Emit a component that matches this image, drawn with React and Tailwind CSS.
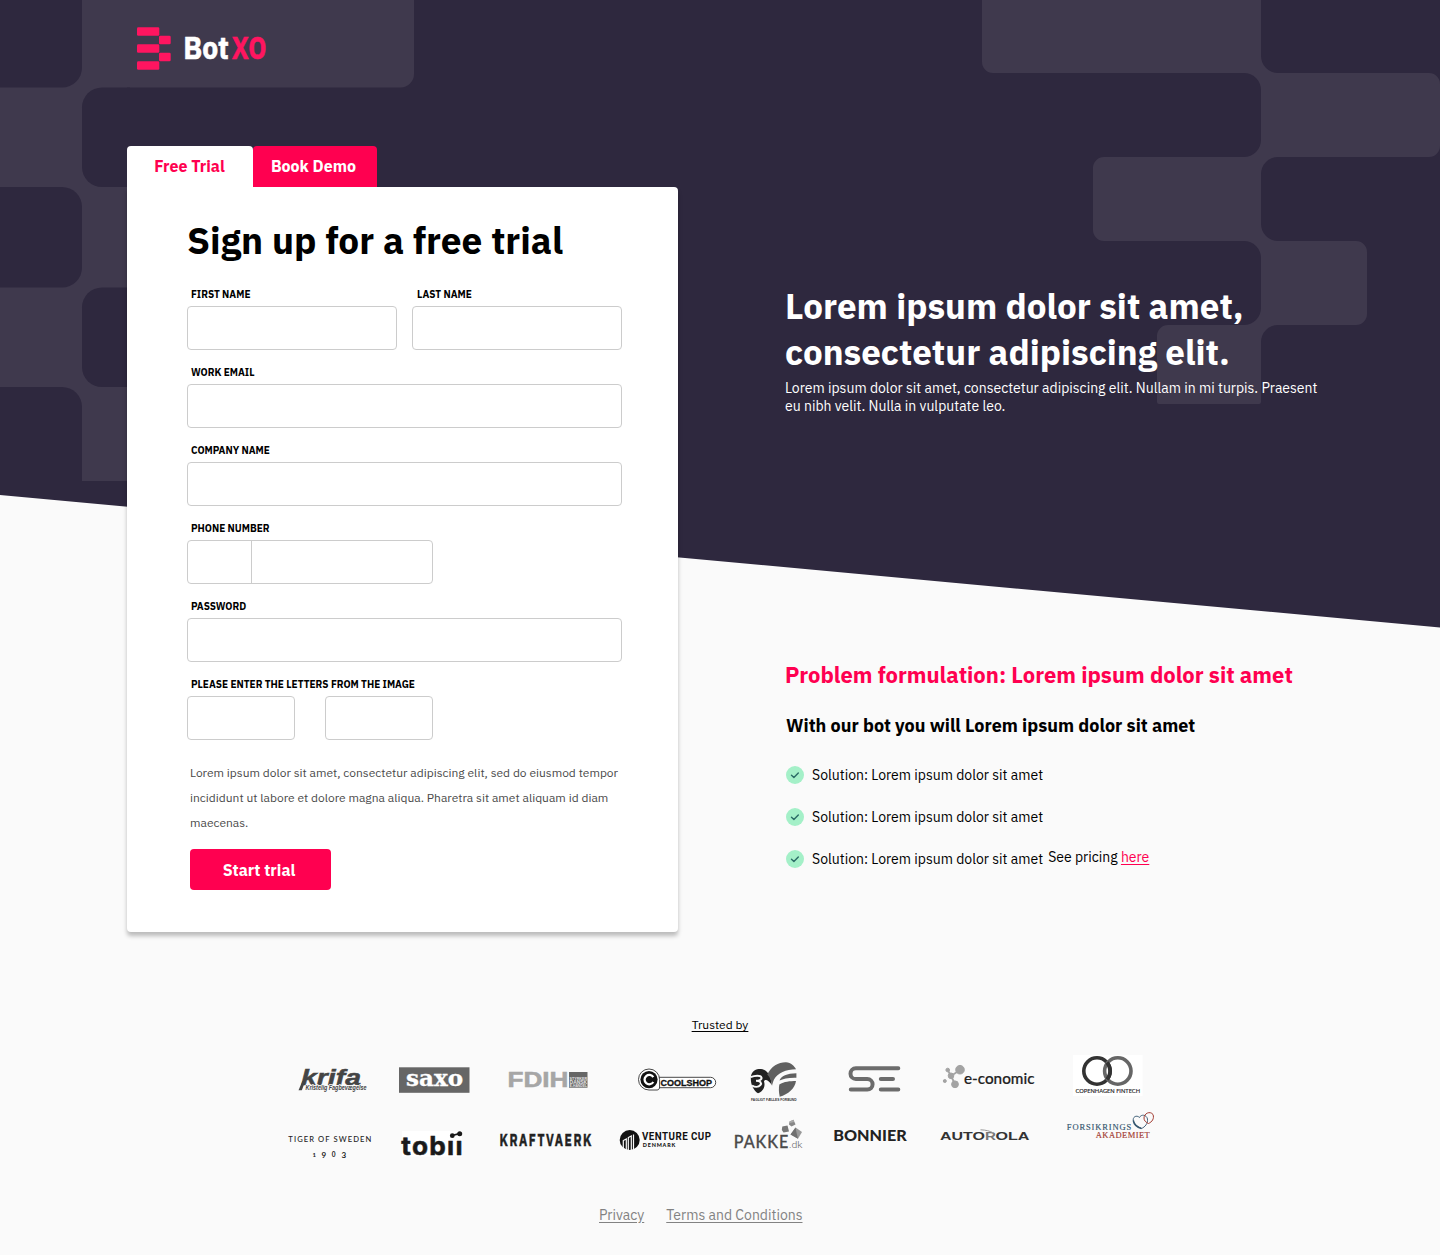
import React from "react";

const DARK = "#2e283e";
const LIGHT = "#3f394d";

function Backdrop() {
  return (
    <svg className="absolute inset-0 -z-10" width="1440" height="1255" viewBox="0 0 1440 1255" aria-hidden="true">
      <path d="M0 0H1440V627.5L0 495Z" fill={DARK} />
      {/* left block pattern */}
      <path d="M0 0H414V74a13.5 13.5 0 0 1-13.5 13.5H127V481H82V430H0Z" fill={LIGHT} />
      <path d="M0 0H82V67.500a20 20 0 0 1-20 20H0Z" fill={DARK} />
      <path d="M130 87.500H102a20 20 0 0 0-20 20V167a20 20 0 0 0 20 20H130Z" fill={DARK} />
      <path d="M0 187H62a20 20 0 0 1 20 20V267.500a20 20 0 0 1-20 20H0Z" fill={DARK} />
      <path d="M130 287.500H102a20 20 0 0 0-20 20V367a20 20 0 0 0 20 20H130Z" fill={DARK} />
      <path d="M0 387H62a20 20 0 0 1 20 20V440H0Z" fill={DARK} />
      {/* right block pattern */}
      <path
        fill={LIGHT}
        d="M982 0H1261V56a17 17 0 0 0 17 17H1429a11 11 0 0 1 11 11V146a11 11 0 0 1-11 11H1278a17 17 0 0 0-17 17V224a17 17 0 0 0 17 17H1356a11 11 0 0 1 11 11V314a11 11 0 0 1-11 11H1278a17 17 0 0 0-17 17V402a2 2 0 0 1-2 2H1159a2 2 0 0 1-2-2V336a11 11 0 0 1 11-11H1244a17 17 0 0 0 17-17V258a17 17 0 0 0-17-17H1104a11 11 0 0 1-11-11V168a11 11 0 0 1 11-11H1244a17 17 0 0 0 17-17V90a17 17 0 0 0-17-17H993a11 11 0 0 1-11-11Z"
      />
    </svg>
  );
}

function BotXOLogo() {
  return (
    <svg className="overflow-visible" width="140" height="46" viewBox="136 26 140 46">
      <g fill="#ff1560">
        <rect x="137" y="27.300" width="22.300" height="8.500" rx="1.300" />
        <rect x="159" y="35.800" width="11.700" height="8.500" rx="1.300" />
        <rect x="137" y="44.300" width="22.300" height="8.500" rx="1.300" />
        <rect x="159" y="52.800" width="11.700" height="8.500" rx="1.300" />
        <rect x="137" y="61.200" width="22.300" height="8.500" rx="1.300" />
      </g>
      <g fontWeight="700" fontSize="30.500" strokeWidth=".5">
        <text x="183.300" y="59.200" fill="#fff" stroke="#fff" textLength="45.500" lengthAdjust="spacingAndGlyphs">Bot</text>
        <text x="231.800" y="59.200" fill="#ff1560" stroke="#ff1560" textLength="34.500" lengthAdjust="spacingAndGlyphs">XO</text>
      </g>
    </svg>
  );
}

function Field({ label, className = "", labelClass = "pl-1", children }) {
  return (
    <label className={"flex flex-col gap-[3px] " + className}>
      <span className={"text-[10px] leading-4 font-bold whitespace-nowrap " + labelClass}>{label}</span>
      {children || <Box className="w-full" />}
    </label>
  );
}

function Box({ className }) {
  return <input className={"h-11 rounded border border-[#cccccc] bg-white px-3 text-sm outline-none " + className} />;
}

function Solution({ children }) {
  return (
    <li className="flex h-[18px] items-center">
      <svg width="18" height="18" viewBox="0 0 18 18" className="mr-2">
        <circle cx="9" cy="9" r="9" fill="#a4f0c8" />
        <path d="M5.500 9.300 7.900 11.500 12.300 7" fill="none" stroke="#2b6b66" strokeWidth="1.400" strokeLinecap="round" strokeLinejoin="round" />
      </svg>
      <span className="text-sm leading-[18px]">Solution: Lorem ipsum dolor sit amet</span>
      {children}
    </li>
  );
}

function Fit({ w, ...p }) {
  return <text textLength={w} lengthAdjust="spacingAndGlyphs" {...p} />;
}

function LogoRowOne() {
  return (
    <div className="flex h-[50px] pl-[296px]">
      <svg className="overflow-visible" width="74" height="50" viewBox="296 1054 74 50">
        <path d="M305 1082 301.800 1090.300H298.500L302.500 1081Z" fill="#444" />
        <Fit x="301" y="1084.500" w="60" fontFamily="Liberation Sans" fontWeight="700" fontStyle="italic" fontSize="22.500" fill="#444" stroke="#444" strokeWidth=".5">krifa</Fit>
        <Fit x="305.500" y="1089.600" w="61" fontFamily="Liberation Sans" fontWeight="700" fontStyle="italic" fontSize="7" fill="#444" stroke="#fafafa" strokeWidth="1.500" paintOrder="stroke">Kristelig Fagbevægelse</Fit>
      </svg>
      <svg className="ml-7" width="72" height="50" viewBox="398 1054 72 50">
        <rect x="399" y="1067.300" width="70.500" height="25.500" fill="#666" />
        <Fit x="406" y="1085.800" w="57" fontFamily="DejaVu Serif" fontWeight="700" fontSize="21.500" fill="#fff" stroke="#fff" strokeWidth=".3">saxo</Fit>
      </svg>
      <svg className="ml-[37px] overflow-visible" width="82" height="50" viewBox="507 1054 82 50">
        <Fit x="507.500" y="1087.300" w="61" fontFamily="Liberation Sans" fontWeight="700" fontSize="21.500" fill="#a6a6a6" stroke="#a6a6a6" strokeWidth=".5">FDIH</Fit>
        <rect x="569" y="1072" width="18.500" height="15.700" fill="#666" />
        <g fontFamily="Liberation Sans" fontWeight="700" fill="#e2e2e2">
          <Fit x="569.600" y="1080" w="17.500" fontSize="3.800">STYRKER</Fit>
          <Fit x="569.600" y="1084" w="17.500" fontSize="4.800">DANSK</Fit>
          <Fit x="569.600" y="1087.200" w="17.500" fontSize="3.800">E-HANDEL</Fit>
        </g>
      </svg>
      <svg className="ml-[47px]" width="82" height="50" viewBox="636 1054 82 50">
        <g fill="#fff" stroke="#333" strokeWidth=".9">
          <path d="M655 1077.300H710.500a5.200 5.200 0 0 1 0 10.400H655Z" />
          <path d="M649 1069a10.600 10.600 0 0 1 10.600 10.600V1087c0 1.500-.8 3-2.500 3H649a10.500 10.500 0 0 1 0-21Z" />
        </g>
        <circle cx="649" cy="1079.600" r="8.600" fill="#111" />
        <path d="M653.300 1077.200A4.700 4.700 0 1 0 653.300 1082" fill="none" stroke="#fff" strokeWidth="2.300" />
        <Fit x="660.500" y="1085.700" w="51.500" fontFamily="Liberation Sans" fontWeight="700" fontSize="8.800" fill="#111" stroke="#111" strokeWidth=".3">COOLSHOP</Fit>
      </svg>
      <svg className="ml-[30px] overflow-visible" width="51" height="50" viewBox="748 1054 51 50">
        <path d="M751 1076C752 1070.300 757 1068.700 761 1069 767 1069.500 771 1075 771.800 1085 768 1079.500 765 1079 764 1081.500 766 1087 762 1092 758 1093.300 753 1090 750 1083 751 1076Z" fill="#222" />
        <path d="M750.500 1077.200C755 1075.300 760.500 1075 761.500 1077.500 762 1080 758.500 1080.800 756 1080.800 760.500 1080.800 762 1083 760.300 1085.200 758.500 1087.500 754.500 1087 752 1085.700" fill="none" stroke="#fafafa" strokeWidth="2" />
        <path d="M767.300 1074.500C771 1066 779 1062 786 1062.200 791 1062.700 794.500 1066 796 1069.300 786 1069.500 777.500 1073 774 1079.500 773 1082 772.300 1084 772 1086 771.500 1081 770 1077 767.300 1074.500Z" fill="#606060" />
        <path d="M779.500 1080.500C781 1076.300 787 1073.300 796.400 1073.300V1077.800C789 1077.500 783 1079 779.500 1080.500Z" fill="#606060" />
        <path d="M779.300 1084.500C784 1081.500 790 1081 796 1081 795 1088.500 788 1094.500 779.700 1096.700 778.700 1092 778.700 1088 779.300 1084.500Z" fill="#606060" />
        <Fit x="751" y="1101.200" w="45.500" fontFamily="Liberation Sans" fontWeight="700" fontSize="3.900" fill="#333">FAGLIGT FÆLLES FORBUND</Fit>
      </svg>
      <svg className="ml-[47px]" width="56" height="50" viewBox="846 1054 56 50">
        <path d="M898.300 1068.300H855.800a5.300 5.350 0 0 0 0 10.700H867.300a5.300 5.300 0 0 1 0 10.600H850.800M880.800 1079H893M880.800 1089.600H898.300" fill="none" stroke="#6c6c6c" strokeWidth="4" strokeLinecap="round" />
      </svg>
      <svg className="ml-[39px]" width="95" height="50" viewBox="941 1054 95 50">
        <g fill="#a3a3a3" stroke="#a3a3a3">
          <circle cx="947.700" cy="1070" r="1.800" />
          <circle cx="960" cy="1069.700" r="4.300" />
          <circle cx="951" cy="1075.800" r="2.800" />
          <circle cx="944.800" cy="1081" r="1.500" />
          <circle cx="955" cy="1084.300" r="3.400" />
          <path d="M947.700 1070 951 1076 960 1070M951 1076 955 1084" fill="none" strokeWidth="1.800" />
        </g>
        <Fit x="964" y="1084.300" w="70.500" fontFamily="Lato" fontWeight="500" fontSize="15" fill="#222" stroke="#222" strokeWidth=".2">e-conomic</Fit>
      </svg>
      <svg className="ml-[36px]" width="71" height="50" viewBox="1072 1054 71 50">
        <rect x="1073" y="1055" width="69.500" height="41" fill="#fff" />
        <circle cx="1097" cy="1071" r="13.200" fill="none" stroke="#333" strokeWidth="3.600" />
        <circle cx="1117.800" cy="1071" r="13.200" fill="none" stroke="#666" strokeWidth="3.600" />
        <path d="M1107 1062.500a13.200 13.200 0 0 1 0 17" fill="none" stroke="#333" strokeWidth="3.600" />
        <Fit x="1075.500" y="1093.200" w="64.500" fontFamily="Lato" fontSize="6" fill="#222" stroke="#222" strokeWidth=".15">COPENHAGEN FINTECH</Fit>
      </svg>
    </div>
  );
}

function LogoRowTwo() {
  return (
    <div className="mt-1 flex h-[55px] pl-[286px]">
      <svg width="87" height="55" viewBox="286 1108 87 55">
        <text x="288.300" y="1142" textLength="83" fontFamily="Lato" fontWeight="500" fontSize="7.600" fill="#222">TIGER OF SWEDEN</text>
        <g fontFamily="Lato" fontWeight="700" fill="#222">
          <text x="312.500" y="1156.500" fontSize="6">1</text>
          <text x="321.500" y="1158" fontSize="8">9</text>
          <text x="331.700" y="1156.500" fontSize="6.500">0</text>
          <text x="341.500" y="1158" fontSize="8">3</text>
        </g>
      </svg>
      <svg className="ml-[27px] overflow-visible" width="64" height="55" viewBox="400 1108 64 55">
        <rect x="402" y="1131" width="60" height="25.500" fill="#fff" />
        <Fit x="401.300" y="1154.800" w="62.500" fontFamily="Inter" fontWeight="700" fontSize="25" letterSpacing="1.200" fill="#1a1a1a" stroke="#1a1a1a" strokeWidth=".5">tobıı</Fit>
        <path d="M452.300 1135.500 459.300 1133.700" stroke="#1a1a1a" strokeWidth="1.800" />
        <circle cx="452.300" cy="1135.700" r="2.400" fill="#1a1a1a" />
        <circle cx="459.700" cy="1133.800" r="2.500" fill="#1a1a1a" />
      </svg>
      <svg className="ml-[34px] overflow-visible" width="95" height="55" viewBox="498 1108 95 55">
        <Fit x="499.500" y="1146" w="93.500" fontWeight="700" fontSize="17" letterSpacing="2.200" fill="#222" stroke="#222" strokeWidth=".4">KRAFTVAERK</Fit>
      </svg>
      <svg className="ml-[25px]" width="95" height="55" viewBox="618 1108 95 55">
        <circle cx="629.700" cy="1140" r="10" fill="#111" />
        <path d="M623.300 1150V1140.500L626.300 1139V1150M628.300 1150V1137.500L631.300 1136V1150M633.500 1150V1134.500" fill="none" stroke="#fafafa" strokeWidth="1.200" />
        <Fit x="642" y="1140" w="69.500" fontFamily="Roboto" fontWeight="700" fontSize="10.300" letterSpacing=".5" fill="#111">VENTURE CUP</Fit>
        <text x="642.800" y="1147.300" textLength="32.500" fontFamily="Lato" fontWeight="900" fontSize="5.400" fill="#111">DENMARK</text>
      </svg>
      <svg className="ml-5 overflow-visible" width="71" height="55" viewBox="733 1108 71 55">
        <path d="M782.300 1126.500 787.500 1125.500 789 1131.500 783.500 1132.500 781.800 1130Z" fill="#777" />
        <path d="M789.500 1121.500 793.500 1119.800 795.500 1124.500 791.500 1126.500 789 1124.500Z" fill="#888" />
        <path d="M789.500 1121.500 793.500 1119.800 794 1122 790 1123Z" fill="#aaa" />
        <path d="M795.500 1127.500 802 1132 798 1138.800 790.500 1134.500Z" fill="#999" />
        <path d="M790.500 1134.500 795.500 1127.500 796.500 1132.500 798 1138.800Z" fill="#707070" />
        <Fit x="733.800" y="1148" w="55.500" fontFamily="Lato" fontWeight="500" fontSize="16.300" letterSpacing="1" fill="#4a4a4a" stroke="#4a4a4a" strokeWidth=".3">PAKKE</Fit>
        <Fit x="789" y="1148" w="13.500" fontFamily="Roboto" fontWeight="300" fontSize="9.800" fill="#666">.dk</Fit>
      </svg>
      <svg className="ml-[28px]" width="77" height="55" viewBox="832 1108 77 55">
        <Fit x="833.300" y="1140.600" w="73.500" fontFamily="Lato" fontWeight="900" fontSize="14.500" fill="#222">BONNIER</Fit>
      </svg>
      <svg className="ml-[30px]" width="92" height="55" viewBox="939 1108 92 55">
        <g fontFamily="Liberation Sans" fontWeight="700" fontSize="10.500">
          <Fit x="940" y="1139.700" w="45" fill="#333">AUTO</Fit>
          <Fit x="985" y="1139.700" w="11" fill="#777">R</Fit>
          <Fit x="995.500" y="1139.700" w="34" fill="#333">OLA</Fit>
        </g>
        <path d="M980.500 1129.800C986 1130 990 1131 993.500 1133" fill="none" stroke="#999" strokeWidth="1" />
      </svg>
      <svg className="ml-[34px]" width="92" height="55" viewBox="1065 1108 92 55">
        <g fontFamily="Liberation Serif" fontSize="8.500">
          <text x="1066.800" y="1129.500" textLength="64.500" fill="#34566f" stroke="#34566f" strokeWidth=".15">FORSIKRINGS</text>
          <text x="1095.800" y="1138.200" textLength="54" fill="#a33a30" stroke="#a33a30" strokeWidth=".15">AKADEMIET</text>
        </g>
        <path d="M1147.500 1119C1146.500 1114.500 1141 1114 1139.500 1117.500 1136.500 1114.500 1132 1117 1133.500 1121.500 1134.800 1125 1139 1127.500 1141.500 1128.500 1145 1127 1148 1123.500 1147.500 1119Z" fill="none" stroke="#34566f" strokeWidth=".9" />
        <path d="M1133.300 1120.500C1134 1124.500 1138 1127.500 1141.500 1128.500" fill="none" stroke="#34566f" strokeWidth="1.500" />
        <path d="M1144 1118C1144 1113.500 1150 1110.500 1153 1114.500 1154.500 1118.500 1152 1122 1148.500 1123.500 1146 1122.500 1143.800 1120.500 1144 1118Z" fill="none" stroke="#a33a30" strokeWidth="1" />
      </svg>
    </div>
  );
}

export default function App() {
  return (
    <div className="relative isolate flex h-[1255px] w-[1440px] flex-col overflow-hidden bg-[#fafafa] font-['IBM_Plex_Sans','Roboto',sans-serif] text-black">
      <Backdrop />
      <header className="h-[146px] pt-[26px] pl-[136px]">
        <BotXOLogo />
      </header>

      <main className="flex items-start pl-[127px]">
        <section className="w-[551px]">
          <div className="flex text-base font-bold">
            <button className="h-[41px] w-[126px] rounded-t bg-white pr-px pb-px text-[#ff0050]">Free Trial</button>
            <button className="h-[41px] w-[124px] rounded-t bg-[#ff0050] pr-[3px] pb-px text-white">Book Demo</button>
          </div>
          <form className="h-[745px] rounded-b rounded-tr bg-white pt-[29px] pr-14 pl-[60px] shadow-[0_4px_4px_rgba(0,0,0,0.25)]">
            <h1 className="text-[37px] leading-[48px] font-bold whitespace-nowrap">Sign up for a free trial</h1>
            <div className="mt-[23px] flex flex-col gap-[15px]">
              <div className="flex gap-[15px]">
                <Field label="FIRST NAME" className="w-[210px]" />
                <Field label="LAST NAME" className="w-[210px]" labelClass="pl-[5px]" />
              </div>
              <Field label="WORK EMAIL" />
              <Field label="COMPANY NAME" />
              <Field label="PHONE NUMBER">
                <div className="flex h-11 w-[246px] divide-x divide-[#cccccc] overflow-hidden rounded border border-[#cccccc]">
                  <input className="w-16 outline-none" />
                  <input className="min-w-0 flex-1 outline-none" />
                </div>
              </Field>
              <Field label="PASSWORD" />
              <Field label="PLEASE ENTER THE LETTERS FROM THE IMAGE">
                <div className="flex gap-[30px]">
                  <Box className="w-[108px]" />
                  <Box className="w-[108px]" />
                </div>
              </Field>
            </div>
            <p className="mt-5 ml-[3px] w-[435px] text-xs leading-[25px] text-[#4a4a4a]">
              Lorem ipsum dolor sit amet, consectetur adipiscing elit, sed do eiusmod tempor incididunt ut labore et dolore magna aliqua. Pharetra sit amet aliquam id diam maecenas.
            </p>
            <button className="mt-[14px] ml-[3px] h-[41px] w-[141px] rounded bg-[#ff0050] pt-px pr-[3px] text-base font-bold text-white">Start trial</button>
          </form>
        </section>

        <section className="ml-[107px] w-[560px] pt-[137px]">
          <h2 className="text-[35px] leading-[46px] font-bold text-white">
            Lorem ipsum dolor sit amet,
            <br />
            consectetur adipiscing elit.
          </h2>
          <p className="mt-1 w-[545px] text-sm leading-[18px] text-white">
            Lorem ipsum dolor sit amet, consectetur adipiscing elit. Nullam in mi turpis. Praesent eu nibh velit. Nulla in vulputate leo.
          </p>
          <h3 className="mt-[246px] text-[22px] leading-7 font-bold whitespace-nowrap text-[#ff0050]">Problem formulation: Lorem ipsum dolor sit amet</h3>
          <h4 className="mt-[25px] ml-px text-lg leading-6 font-bold">With our bot you will Lorem ipsum dolor sit amet</h4>
          <ul className="mt-7 ml-px flex flex-col gap-6">
            <Solution />
            <Solution />
            <Solution>
              <span className="mb-1 ml-[5px] text-sm leading-[18px]">
                See pricing <a className="text-[#ff0050] underline underline-offset-2">here</a>
              </span>
            </Solution>
          </ul>
        </section>
      </main>

      <p className="mt-[85px] text-center text-xs leading-4 underline underline-offset-2">Trusted by</p>
      <div className="mt-[21px]">
        <LogoRowOne />
        <LogoRowTwo />
      </div>

      <footer className="mt-[43px] flex gap-[22px] pl-[599px] text-sm leading-[18px] text-[#828282]">
        <a className="underline underline-offset-2">Privacy</a>
        <a className="underline underline-offset-2">Terms and Conditions</a>
      </footer>
    </div>
  );
}
